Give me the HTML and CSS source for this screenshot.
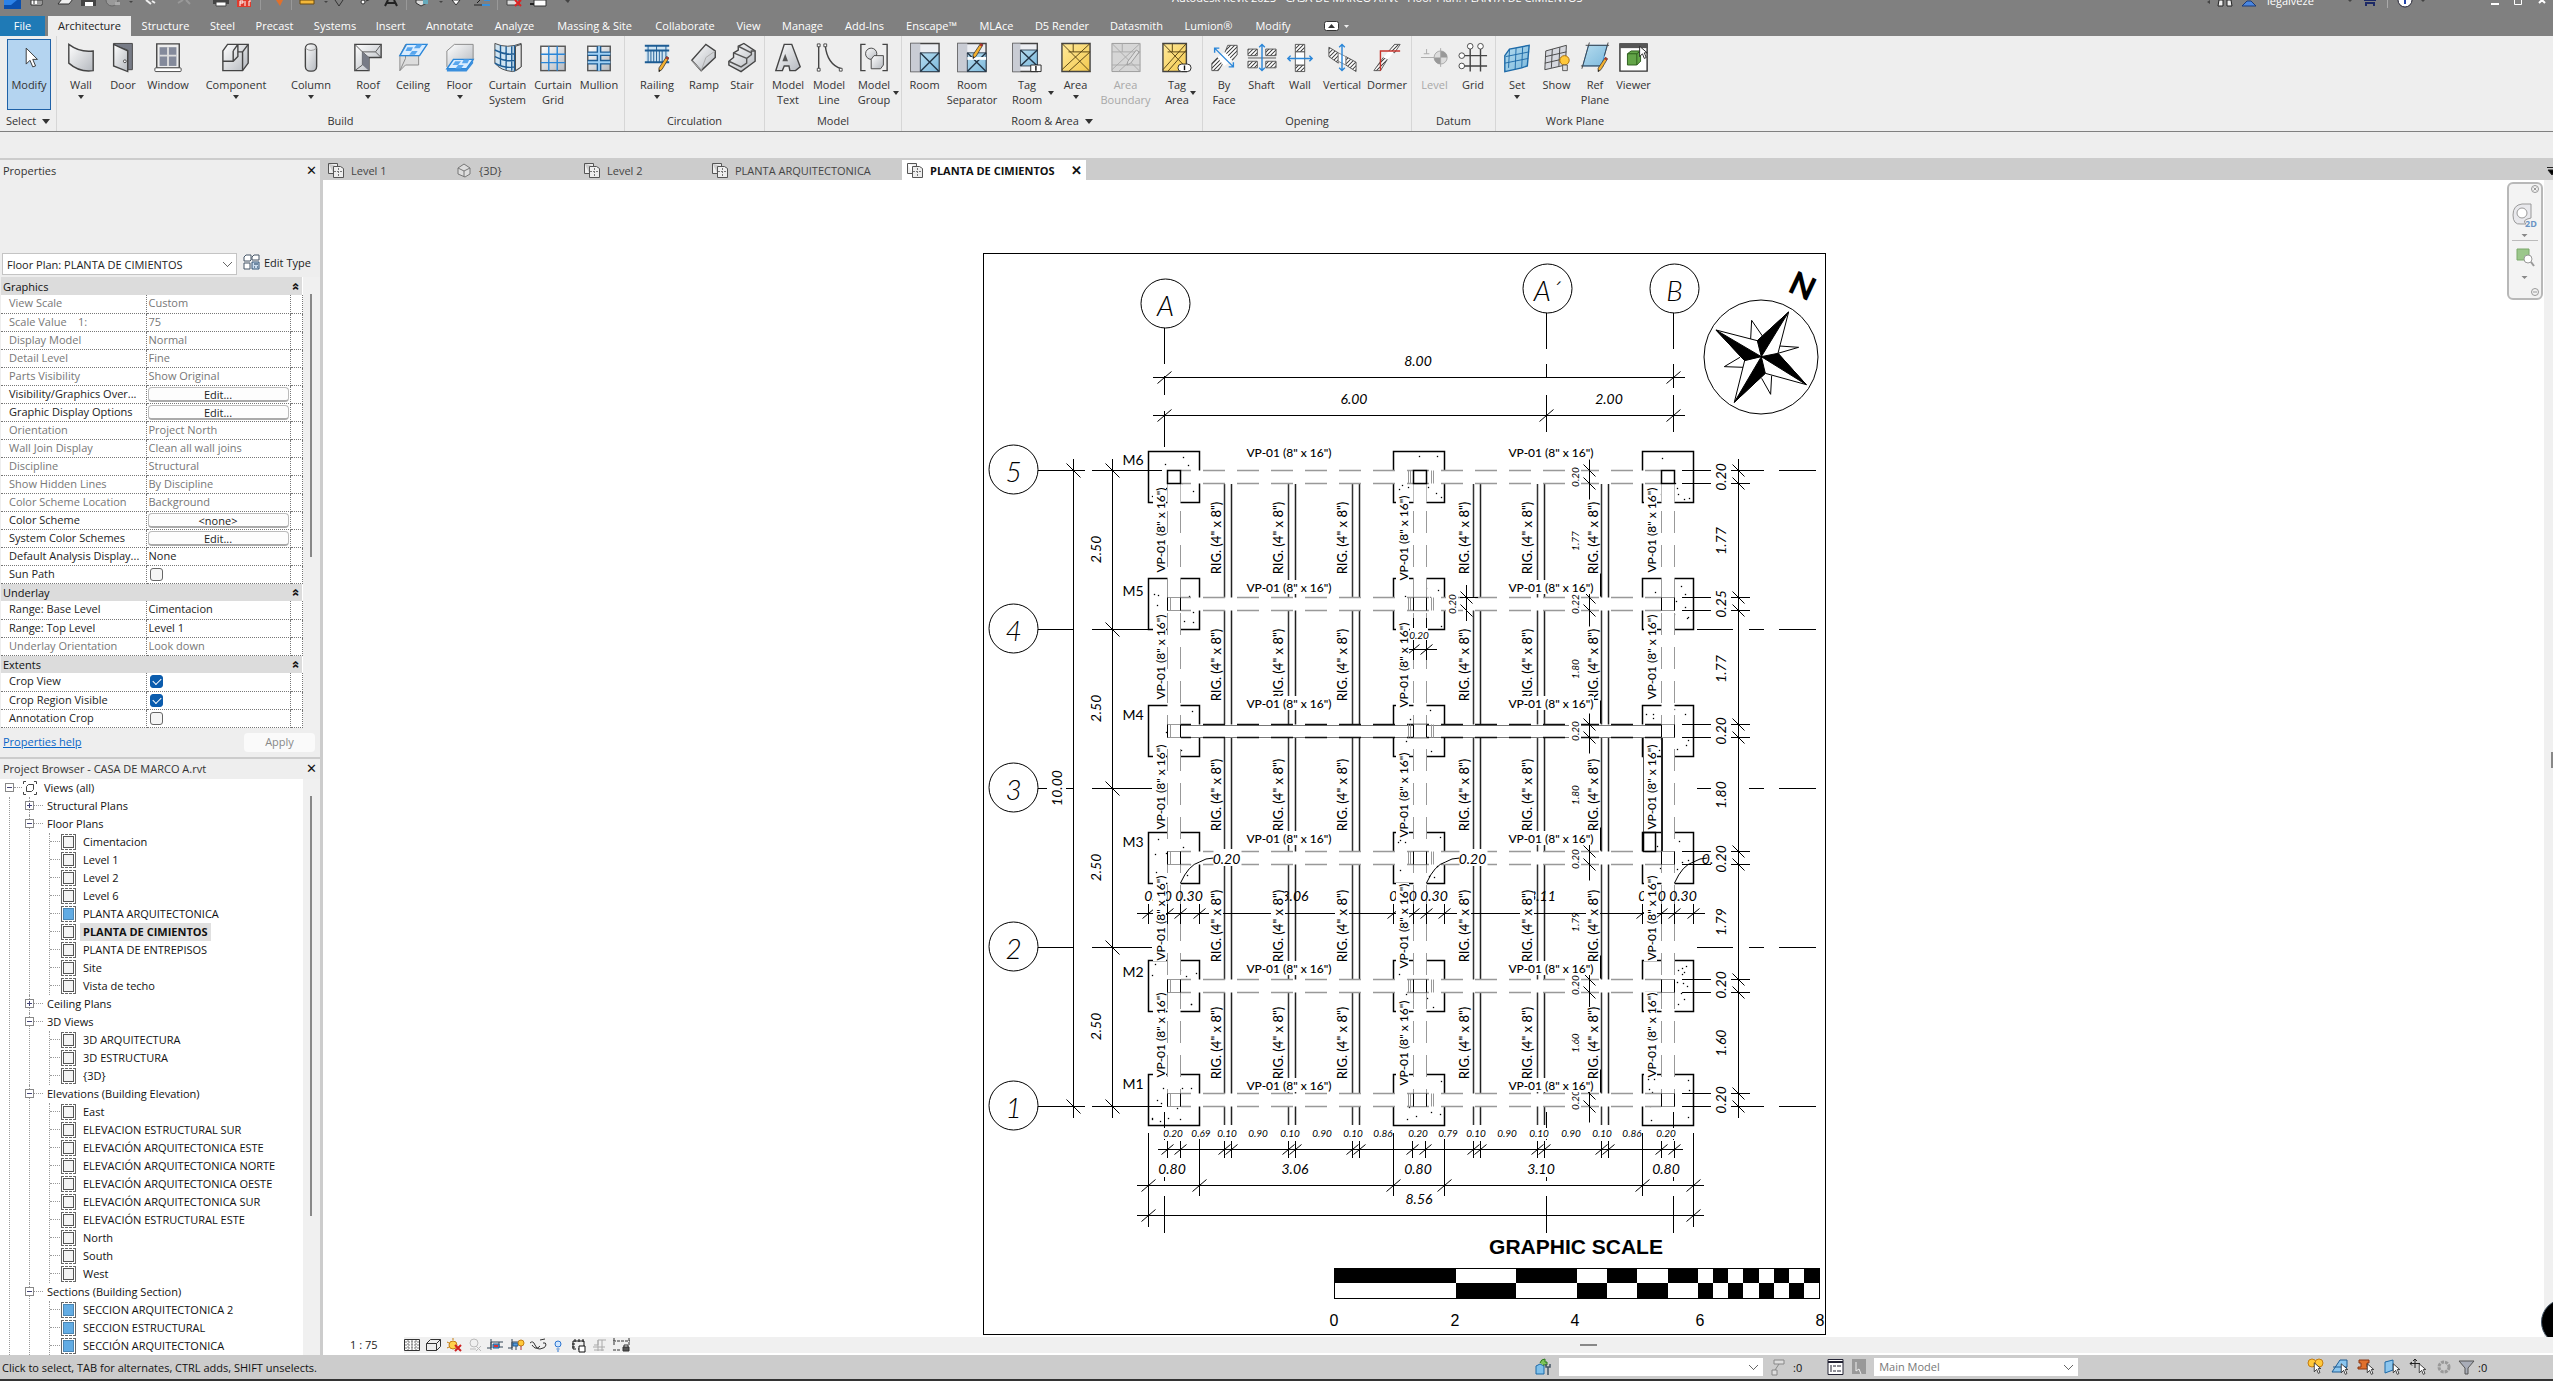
FILE: index.html
```
<!DOCTYPE html>
<html lang="en">
<head>
<meta charset="utf-8">
<title>Autodesk Revit 2023 - CASA DE MARCO A.rvt</title>
<link rel="stylesheet" href="styles.css">
</head>
<body>
<svg class="defs" aria-hidden="true">
  <defs>
    <linearGradient id="steel" x1="0" y1="0" x2="1" y2="1"><stop offset="0" stop-color="#fff"/><stop offset="1" stop-color="#b4b8be"/></linearGradient>
    <linearGradient id="sky" x1="0" y1="0" x2="1" y2="1"><stop offset="0" stop-color="#b5dcef"/><stop offset="1" stop-color="#7db9dc"/></linearGradient>
    <linearGradient id="gold" x1="0" y1="0" x2="1" y2="1"><stop offset="0" stop-color="#ffe99a"/><stop offset="1" stop-color="#f3c94e"/></linearGradient>
    <pattern id="hatch" width="3" height="3" patternUnits="userSpaceOnUse" patternTransform="rotate(45)"><rect width="3" height="3" fill="#fff"/><rect width="1" height="3" fill="#444"/></pattern>
    <symbol id="pencil" viewBox="0 0 14 22"><path d="M11 1l3 2L5 18l-4 3 0-5z" fill="#f4b02e" stroke="#333" stroke-width="1"/><path d="M11 1l3 2-1.500 2.500-3-2z" fill="#a33"/><path d="M1 21l0-3 2 1z" fill="#222"/></symbol>
    <symbol id="sheet" viewBox="0 0 16 16"><path d="M.5 1.500h9v3M.5 1.500v10h5M5.500 4.500h7l3 2v9h-10z" fill="#eee" stroke="#555"/><path d="M10.500 6v8M6 9.500h9" stroke="#777" stroke-dasharray="2 1"/></symbol>
    <symbol id="cursor" viewBox="0 0 10 16"><path d="M1 1v11l3-3 2 5 2-1-2-5h3z" fill="#fff" stroke="#222"/></symbol>
  </defs>
</svg>

<header>
  <div class="titlebar">
    <svg class="quick" height="16" fill="none">
      <path d="M4 0h17v9H4z" fill="#0a4fae"/><path d="M4 0h13l-6 5H4z" fill="#2c82e8"/>
      <path d="M31 0h11v5H31z" fill="#fff" stroke="#333"/><path d="M33 1h2M37 1h4M33 3h2M37 3h4" stroke="#333"/>
      <path d="M58 4l4-5h11l-4 5z" fill="#eee" stroke="#333"/>
      <path d="M81 0h15v6H81z" fill="#444"/><path d="M85 2h8v4h-8z" fill="#fff"/>
      <circle cx="112" cy="0" r="6" fill="#999" stroke="#666"/><path d="M115 2h5v3h-5z" fill="#aaa"/>
      <path d="M129 1h4l-2 2zM439 1h4l-2 2zM324 1h4l-2 2zM565 0h5l-2 3z" fill="#444"/>
      <path d="M146 0l5 4M152 1l3 2" stroke="#eee" stroke-width="2"/><path d="M178 3l5-3M186 0l4 4" stroke="#999" stroke-width="2"/>
      <path d="M213 0h16v4h-16z" fill="#444"/><path d="M216 2h10v4h-10z" fill="#fff" stroke="#444"/>
      <path d="M237 0h14v7h-14z" fill="#e03a2c"/><path d="M240 6V1h3v2h-3M245 1v5M249 6V1h2" stroke="#fff"/>
      <path d="M260.500 0v10M406.500 0v10M497.500 0v10M291.500 0v10" stroke="#999"/>
      <path d="M276 0h7l-3 6z" fill="#e0702c"/><path d="M300 0h14v4h-14z" fill="#f4b83a" stroke="#6b4b10"/>
      <path d="M335 0l4 6M343 0l-4 6" stroke="#333"/><circle cx="363" cy="2" r="2" fill="#fff" stroke="#333"/><path d="M366 1l5-2" stroke="#333"/>
      <path d="M385 6l3-6M397 6l-3-6M387 3h8" stroke="#222" stroke-width="2"/>
      <path d="M416 0h11v3l-6 3-5-3z" fill="#ddd" stroke="#333"/><path d="M423 0h5v4h-5z" fill="#6ab"/>
      <path d="M452 0h8l-4 5z" fill="#fff" stroke="#333"/><path d="M474 5h8M480 0l-3 3" stroke="#222"/><path d="M484 0h6M482 5h8" stroke="#3a8fd8" stroke-width="2"/>
      <path d="M507 0h12v5h-12z" fill="#ddd" stroke="#444"/><path d="M515 0l6 6M521 0l-6 6" stroke="#d22" stroke-width="2"/>
      <path d="M534 0h12v6h-12z" fill="#fff" stroke="#333"/><path d="M530 4h4" stroke="#222" stroke-width="2"/>
    </svg>
    <span class="app-title">Autodesk Revit 2023 - CASA DE MARCO A.rvt - Floor Plan: PLANTA DE CIMIENTOS</span>
    <svg class="info" width="60" height="10" viewBox="0 0 60 10"><path d="M0 2l3-2v4z" fill="#444"/><path d="M12 0h4v6h-5zM20 0h4l1 6h-5z" fill="#eee" stroke="#222"/><path d="M35 6l5-5h4l5 5z" fill="#4a86e0" stroke="#1b3a78"/></svg>
    <span class="user">legalveze</span>
    <svg class="win" width="205" height="16" viewBox="0 0 205 16"><path d="M0 0h4l-2 2z" fill="#444"/><path d="M16 0h12M17 3h10M18 6v-3M26 6v-3" stroke="#1d2a66" stroke-width="2"/><path d="M39.500 0v8" stroke="#aaa"/><circle cx="57" cy="0" r="7" fill="#fff" stroke="#223"/><path d="M57 0v4" stroke="#24a" stroke-width="2"/><path d="M73 0h4l-2 2z" fill="#444"/><path d="M143 4h8" stroke="#fff" stroke-width="2"/><path d="M166.500 0v4.500h7V0" fill="none" stroke="#fff"/><path d="M191 3l6-6M197 3l-4-4" stroke="#fff" stroke-width="2"/></svg>
  </div>
  <nav class="tabs">
    <button class="file">File</button><span></span><button class="on">Architecture</button><button>Structure</button><button>Steel</button><button>Precast</button><button>Systems</button><button>Insert</button><button>Annotate</button><button>Analyze</button><button>Massing &amp; Site</button><button>Collaborate</button><button>View</button><button>Manage</button><button>Add-Ins</button><button>Enscape™</button><button>MLAce</button><button>D5 Render</button><button>Datasmith</button><button>Lumion®</button><button>Modify</button>
    <button class="collapse" aria-label="Minimize ribbon"><svg width="26" height="12" viewBox="0 0 26 12"><rect x=".5" y="1.500" width="14" height="9" rx="2" fill="#fff" stroke="#333"/><path d="M4 8l3.500-4L11 8z" fill="#333"/><path d="M20 5h5l-2.500 3z" fill="#eee"/></svg></button>
  </nav>
  <div class="ribbon">
    <section class="panel p-select">
      <div class="tools"><button class="tool picked"><svg viewBox="0 0 32 32"><path d="M13 6v17l4-4 3 7 3-1-3-7h5z" fill="#fff" stroke="#333"/></svg>Modify</button></div>
      <h2>Select <i></i></h2>
    </section>
    <section class="panel p-build">
      <div class="tools">
        <button class="tool more"><svg viewBox="0 0 32 32"><path d="M3 2q12 9 26 7v21q-15 2-26-8z" fill="url(#steel)" stroke="#444" stroke-width="1.500"/></svg>Wall</button>
        <button class="tool"><svg viewBox="0 0 32 32"><path d="M6 1h20v28h-5V8L6 3z" fill="#777b86" stroke="#444"/><path d="M6 2l15 7v22L6 25z" fill="url(#steel)" stroke="#444" stroke-width="1.500"/><circle cx="18" cy="20" r="1.500" fill="#fff" stroke="#444"/></svg>Door</button>
        <button class="tool"><svg viewBox="0 0 32 32"><path d="M4 1.500h24v26H4z" fill="#eee" stroke="#444" stroke-width="1.500"/><path d="M7 5h18v20H7z" fill="#848a9b"/><path d="M16 5v20M7 14h18" stroke="#ddd" stroke-width="2"/><rect x="2" y="27" width="28" height="4" rx="1" fill="#fff" stroke="#444"/></svg>Window</button>
        <button class="tool more"><svg viewBox="0 0 32 32"><path d="M2 9l5-7h22v20l-6 8H2z" fill="url(#steel)" stroke="#444" stroke-width="1.500"/><path d="M13 9l5-7M2 20h11l5-5V2M13 20V9M18 10h5v20M23 10l6-8" fill="none" stroke="#444" stroke-width="1.500"/></svg>Component</button>
        <button class="tool more"><svg viewBox="0 0 32 32"><rect x="10" y="1.500" width="12" height="29" rx="5" fill="url(#steel)" stroke="#444" stroke-width="1.500"/><path d="M10 6q6 5 12 0" fill="none" stroke="#999"/></svg>Column</button>
        <button class="tool more"><svg viewBox="0 0 32 32"><path d="M2 2h28v14H17v14H2z" fill="url(#steel)" stroke="#444" stroke-width="1.500"/><path d="M2 2l8 8v14l-8 6M10 10h14l6 6M24 10l6-8M10 10l7 6" fill="none" stroke="#555"/><path d="M10 24l7 6V16l-7-6z" fill="#777b86"/></svg>Roof</button>
        <button class="tool"><svg viewBox="0 0 32 32"><path d="M2 14l6-12v15L2 30zM2 14h20v10H8L2 30" fill="#ddd" stroke="#888"/><path d="M9 2h22l-8 12H2z" fill="#d8ecff" stroke="#2a86d8" stroke-width="1.500"/><path d="M10 5h6l-2 4H8zM20 2h6l-3 4h-6zM15 9h6l-3 4h-6z" fill="#58a6ee"/></svg>Ceiling</button>
        <button class="tool more"><svg viewBox="0 0 32 32"><path d="M2 26V9l8-7h20v17" fill="url(#steel)" stroke="#888"/><path d="M9 18h21l-7 10H2z" fill="#d8ecff" stroke="#2a86d8" stroke-width="1.500"/><path d="M11 20h6l-3 4H8zM20 18h6l-2 4h-6zM14 24h6l-3 4h-6z" fill="#58a6ee"/><path d="M2 28h21v3H2zM23 28l7-9v3l-7 9z" fill="#3b8fdd"/></svg>Floor</button>
        <button class="tool"><svg viewBox="0 0 32 32"><path d="M2 1q13 6 28 0v25q-4 4-9 5Q8 30 2 22z" fill="#cfe4f2" stroke="#444"/><path d="M2 8q12 6 21 4M2 15q12 6 21 4M2 22q10 6 21 4M8 3v22M14 4v25M20 4v26M23 3v28" fill="none" stroke="#1d5c94" stroke-width="1.500"/><path d="M24 4l6-2v24l-6 4z" fill="#e8e8e8" stroke="#444"/></svg>Curtain<br>System</button>
        <button class="tool"><svg viewBox="0 0 32 32"><rect x="3" y="4" width="26" height="26" fill="url(#steel)" stroke="#555" stroke-width="1.500"/><path d="M11.500 4v26M20.500 4v26M3 12.500h26M3 21.500h26" stroke="#2a86d8" stroke-width="1.500"/></svg>Curtain<br>Grid</button>
        <button class="tool"><svg viewBox="0 0 32 32"><rect x="4" y="4" width="24" height="26" fill="url(#steel)" stroke="#555" stroke-width="1.500"/><path d="M16 4v26M4 12h24M4 21h24" stroke="#1d5c94" stroke-width="5"/><path d="M16 4v26M4 12h24M4 21h24" stroke="#9fd0f5" stroke-width="2"/></svg>Mullion</button>
      </div>
      <h2>Build</h2>
    </section>
    <section class="panel p-circulation">
      <div class="tools">
        <button class="tool more"><svg viewBox="0 0 32 32"><path d="M4 4h24v17H4z" fill="#cfe4f2"/><path d="M3 3.500h26M3 8.500h26M3 21h26" stroke="#1d5c94" stroke-width="2"/><path d="M6.500 3v18M9.500 9v12M12.500 9v12M15.500 3v18M18.500 9v12M21.500 9v12M25.500 3v18" stroke="#1d5c94"/><use href="#pencil" x="17" y="14" width="12" height="18"/></svg>Railing</button>
        <button class="tool"><svg viewBox="0 0 32 32"><path d="M3 19L18 2l10 7v7L13 30z" fill="url(#steel)" stroke="#444" stroke-width="1.500"/><path d="M3 19l10 11 5-14L28 9" fill="none" stroke="#aaa"/></svg>Ramp</button>
        <button class="tool"><svg viewBox="0 0 32 32"><path d="M2 20l5-4v-5l5-3V4l6-3 12 8v11L15 31 2 24z" fill="url(#steel)" stroke="#444" stroke-width="1.500"/><path d="M2 20l13 6 6-4v-5l5-4V9l4 0M7 11l14 6M12 4l14 7" fill="none" stroke="#555" stroke-width="1.500"/></svg>Stair</button>
      </div>
      <h2>Circulation</h2>
    </section>
    <section class="panel p-model">
      <div class="tools">
        <button class="tool"><svg viewBox="0 0 32 32"><path d="M12 2h8l9 24-5 4h-6l-1-5h-5l-2 5H3z" fill="url(#steel)" stroke="#444" stroke-width="1.500"/><path d="M13 12l-3 8h6z" fill="#555"/></svg>Model<br>Text</button>
        <button class="tool"><svg viewBox="0 0 32 32"><path d="M5 3v25M12 3q2 20 17 25" fill="none" stroke="#444" stroke-width="1.500"/><path d="M3.500 1.500h3v3h-3zM3.500 27.500h3v3h-3zM10.500 1.500h3v3h-3zM27 27.500h3v3h-3z" fill="#fff" stroke="#444"/></svg>Model<br>Line</button>
        <button class="tool side"><svg viewBox="0 0 32 32"><path d="M7 2H2v28h5M25 2h5v28h-5" fill="none" stroke="#444" stroke-width="1.500"/><circle cx="13" cy="12" r="6" fill="url(#steel)" stroke="#444"/><path d="M13 18l3-4h10v10l-3 4H13z" fill="url(#steel)" stroke="#444"/></svg>Model<br>Group</button>
      </div>
      <h2>Model</h2>
    </section>
    <section class="panel p-room">
      <div class="tools">
        <button class="tool"><svg viewBox="0 0 32 32"><path d="M1 1h30v30H1z" fill="#eceef2" stroke="#444" stroke-width="1.500"/><path d="M1 1h10v30H1z" fill="#c9ccd4"/><path d="M11 11h20v20H11z" fill="url(#sky)" stroke="#345"/><path d="M11 11l20 20M31 11L11 31" stroke="#234" stroke-width="1.500"/></svg>Room</button>
        <button class="tool"><svg viewBox="0 0 32 32"><path d="M1 1h30v30H1z" fill="#eceef2" stroke="#444" stroke-width="1.500"/><path d="M1 1h10v30H1z" fill="#c9ccd4"/><path d="M11 11h20v20H11z" fill="url(#sky)" stroke="#345"/><path d="M11 11l20 20M31 11L11 31" stroke="#234" stroke-width="1.500"/><path d="M11 17h20" stroke="#fff" stroke-width="3"/><use href="#pencil" x="15" y="0" width="14" height="18"/></svg>Room<br>Separator</button>
        <button class="tool side"><svg viewBox="0 0 32 32"><path d="M1 1h26v30H1z" fill="#eceef2" stroke="#444" stroke-width="1.500"/><path d="M1 1h8v30H1z" fill="#c9ccd4"/><path d="M9 8h18v17H9z" fill="url(#sky)" stroke="#345"/><path d="M9 8l18 17M27 8L9 25" stroke="#234" stroke-width="1.500"/><path d="M20 24h11v7H20z" fill="#fff" stroke="#222"/><path d="M25.500 25v5" stroke="#111" stroke-width="1.500"/></svg>Tag<br>Room</button>
        <button class="tool more"><svg viewBox="0 0 32 32"><path d="M1 1h30v30H1z" fill="url(#gold)" stroke="#444" stroke-width="1.500"/><path d="M1 1l30 30M31 10L8 31M31 1L1 29M8 10h23M13 1v9" stroke="#554213" fill="none"/></svg>Area</button>
        <button class="tool" disabled><svg viewBox="0 0 32 32"><path d="M1 1h30v30H1z" fill="#d6d6d6" stroke="#999"/><path d="M1 10h30M12 1v9M1 1l30 30M31 10L8 31M1 29L31 1M1 24h30" stroke="#aaa" fill="none"/><path d="M27 8l3 2-9 12-4 2 1-4z" fill="#ddd" stroke="#999"/></svg>Area<br>Boundary</button>
        <button class="tool side"><svg viewBox="0 0 32 32"><path d="M1 1h25v30H1z" fill="url(#gold)" stroke="#444" stroke-width="1.500"/><path d="M1 1l25 26M26 8L6 31M26 1L1 29M6 10h20M11 1v9" stroke="#554213" fill="none"/><rect x="17" y="23" width="14" height="8" rx="4" fill="#fff" stroke="#222"/><path d="M24 24.500v5" stroke="#111" stroke-width="1.500"/></svg>Tag<br>Area</button>
      </div>
      <h2>Room &amp; Area <i></i></h2>
    </section>
    <section class="panel p-opening">
      <div class="tools">
        <button class="tool"><svg viewBox="0 0 32 32"><path d="M20 3h10v10l-5 6-9-6zM3 30v-8l6-6 6 6-5 8z" fill="url(#hatch)" stroke="#555"/><path d="M9 16l8-6 8 9-9 6z" fill="#fff"/><path d="M6 6l20 20M6 11V6h5M26 21v5h-5" fill="none" stroke="#2a86d8" stroke-width="1.500"/></svg>By<br>Face</button>
        <button class="tool"><svg viewBox="0 0 32 32"><path d="M1 7h10v7H1zM20 7h11v7H20zM1 20h10v7H1zM20 20h11v7H20z" fill="url(#hatch)" stroke="#555"/><path d="M1 16.500h30" stroke="#555"/><path d="M16 2v28M13 5l3-3 3 3M13 27l3 3 3-3" fill="none" stroke="#2a86d8" stroke-width="1.500"/></svg>Shaft</button>
        <button class="tool"><svg viewBox="0 0 32 32"><path d="M11 2h10v8H11zM11 24h10v7H11z" fill="url(#hatch)" stroke="#555"/><path d="M11 10h10v14H11z" fill="#fff" stroke="#555"/><path d="M3 17h26M6 14l-3 3 3 3M26 14l3 3-3 3" fill="none" stroke="#2a86d8" stroke-width="1.500"/></svg>Wall</button>
        <button class="tool"><svg viewBox="0 0 32 32"><path d="M2 5l10 6v11L2 15zM20 15l11 6v10l-11-7z" fill="url(#hatch)" stroke="#555"/><path d="M12 11l8 4v9l-8-4z" fill="#fff" stroke="#888"/><path d="M16 2v28M13 5l3-3 3 3M13 27l3 3 3-3" fill="none" stroke="#2a86d8" stroke-width="1.500"/></svg>Vertical</button>
        <button class="tool"><svg viewBox="0 0 32 32"><path d="M2 30L12 16l5 1L9 30zM18 9l6-7h6l-6 9z" fill="url(#hatch)" stroke="#555"/><path d="M12 16l6-7h6l-7 9z" fill="#fff"/><path d="M9 30V9h21" fill="none" stroke="#c8352c" stroke-width="1.500"/></svg>Dormer</button>
      </div>
      <h2>Opening</h2>
    </section>
    <section class="panel p-datum">
      <div class="tools">
        <button class="tool" disabled><svg viewBox="0 0 32 32"><path d="M1 16h14M4 12h6M7 7v5" stroke="#aaa"/><circle cx="22" cy="16" r="7" fill="#ddd" stroke="#aaa"/><path d="M22 9v7h7a7 7 0 0 0-7-7M22 16v7a7 7 0 0 1-7-7z" fill="#999"/><path d="M22 6v20" stroke="#aaa"/></svg>Level</button>
        <button class="tool"><svg viewBox="0 0 32 32"><path d="M13 6v25M24 6v25M5 14h26M5 25h26" stroke="#444" stroke-width="1.500"/><circle cx="13" cy="4" r="3" fill="#fff" stroke="#444"/><circle cx="24" cy="4" r="3" fill="#fff" stroke="#444"/><circle cx="4" cy="14" r="3" fill="#fff" stroke="#444"/><circle cx="4" cy="25" r="3" fill="#fff" stroke="#444"/></svg>Grid</button>
      </div>
      <h2>Datum</h2>
    </section>
    <section class="panel p-workplane">
      <div class="tools">
        <button class="tool more"><svg viewBox="0 0 32 32"><path d="M3 14l5-7 21-4-2 22-6 2-18 4z" fill="url(#sky)" stroke="#1d6aa8" stroke-width="1.500"/><path d="M8 7l-1 20M15 6l-1 23M22 5l-1 22M4 15l25-5M3 22l25-5" stroke="#1d6aa8" fill="none"/></svg>Set</button>
        <button class="tool"><svg viewBox="0 0 32 32"><path d="M4 9l22-6-1 21L3 29z" fill="#d6d8de" stroke="#444"/><path d="M11 7l-1 20M19 5l-1 20M4 15l22-5M3 22l22-5" stroke="#444" fill="none"/><circle cx="24" cy="19" r="5" fill="#ffc83a" stroke="#a56a08"/><path d="M22 24h5v6h-5z" fill="#ddd" stroke="#555"/></svg>Show</button>
        <button class="tool"><svg viewBox="0 0 32 32"><path d="M9 3h20l-6 22H3z" fill="url(#sky)" stroke="#2a86d8"/><path d="M10 0L2 28M1 25h24M30 0l-4 14M6 3h25" stroke="#444" fill="none"/><use href="#pencil" x="18" y="15" width="12" height="17"/></svg>Ref<br>Plane</button>
        <button class="tool"><svg viewBox="0 0 32 32"><path d="M1 1.500h29v29H1z" fill="#fff" stroke="#333" stroke-width="1.500"/><path d="M1 1h29v5H1z" fill="#555"/><path d="M9 12l4-3h10v11l-4 4H9z" fill="#63a548" stroke="#2c5c1c"/><path d="M9 12h10v12M19 12l4-3" fill="none" stroke="#2c5c1c"/><use href="#cursor" x="21" y="3" width="10" height="16"/></svg>Viewer</button>
      </div>
      <h2>Work Plane</h2>
    </section>
  </div>
  <div class="options"></div>
</header>

<main>
  <aside>
    <section class="props">
      <div class="panel-title"><h2>Properties</h2><button class="close" aria-label="Close Properties">✕</button></div>
      <div class="type-row">
        <select aria-label="Element type"><option>Floor Plan: PLANTA DE CIMIENTOS</option></select>
        <button class="edit-type"><svg width="17" height="16" viewBox="0 0 17 16"><path d="M1 3l2-2h5v5l-1 1H1zM9 3l2-2h5v5H9zM1 9h6v6H1z" fill="#fff" stroke="#456"/><path d="M9 8h7v7H9z" fill="#cde" stroke="#357"/><path d="M11 10h4M11 13h1M14 13h1" stroke="#135"/></svg>Edit Type</button>
      </div>
      <div class="prop-area">
        <table>
          <colgroup><col class="c-name"><col class="c-value"><col class="c-assoc"></colgroup>
          <tr class="sec"><th colspan="3">Graphics<span>»</span></th></tr>
          <tr class="dim"><td>View Scale</td><td>Custom</td><td></td></tr>
          <tr class="dim"><td>Scale Value &nbsp;&nbsp; 1:</td><td>75</td><td></td></tr>
          <tr class="dim"><td>Display Model</td><td>Normal</td><td></td></tr>
          <tr class="dim"><td>Detail Level</td><td>Fine</td><td></td></tr>
          <tr class="dim"><td>Parts Visibility</td><td>Show Original</td><td></td></tr>
          <tr><td>Visibility/Graphics Over...</td><td><button>Edit...</button></td><td></td></tr>
          <tr><td>Graphic Display Options</td><td><button>Edit...</button></td><td></td></tr>
          <tr class="dim"><td>Orientation</td><td>Project North</td><td></td></tr>
          <tr class="dim"><td>Wall Join Display</td><td>Clean all wall joins</td><td></td></tr>
          <tr class="dim"><td>Discipline</td><td>Structural</td><td></td></tr>
          <tr class="dim"><td>Show Hidden Lines</td><td>By Discipline</td><td></td></tr>
          <tr class="dim"><td>Color Scheme Location</td><td>Background</td><td></td></tr>
          <tr><td>Color Scheme</td><td><button>&lt;none&gt;</button></td><td></td></tr>
          <tr><td>System Color Schemes</td><td><button>Edit...</button></td><td></td></tr>
          <tr><td>Default Analysis Display...</td><td>None</td><td></td></tr>
          <tr><td><label for="sun">Sun Path</label></td><td><input type="checkbox" id="sun"></td><td></td></tr>
          <tr class="sec"><th colspan="3">Underlay<span>»</span></th></tr>
          <tr><td>Range: Base Level</td><td>Cimentacion</td><td></td></tr>
          <tr><td>Range: Top Level</td><td>Level 1</td><td></td></tr>
          <tr class="dim"><td>Underlay Orientation</td><td>Look down</td><td></td></tr>
          <tr class="sec"><th colspan="3">Extents<span>»</span></th></tr>
          <tr><td><label for="crop">Crop View</label></td><td><input type="checkbox" id="crop" checked></td><td></td></tr>
          <tr><td><label for="region">Crop Region Visible</label></td><td><input type="checkbox" id="region" checked></td><td></td></tr>
          <tr><td><label for="anno">Annotation Crop</label></td><td><input type="checkbox" id="anno"></td><td></td></tr>
        </table>
        <div class="track"><div class="thumb thumb-props"></div></div>
      </div>
      <div class="prop-foot"><a href="#help">Properties help</a><button disabled>Apply</button></div>
    </section>
    <section class="browser">
      <div class="panel-title"><h2>Project Browser - CASA DE MARCO A.rvt</h2><button class="close" aria-label="Close Project Browser">✕</button></div>
      <div class="tree-area">
        <div class="tree">
          <div class="row root"><b class="ex"></b><i class="dash"></i><svg width="16" height="16" viewBox="0 0 16 16" fill="none" stroke="#444"><path d="M4 1.500H1.500V4M12 1.500h2.500V4M4 14.500H1.500V12M12 14.500h2.500V12"/><path d="M4.500 6.500l2-2h5v5l-2 2h-5z"/></svg>Views (all)</div>
          <ul class="groups">
            <li><div class="row"><b class="ex plus"></b><i class="dash"></i>Structural Plans</div></li>
            <li><div class="row"><b class="ex"></b><i class="dash"></i>Floor Plans</div>
              <ul><li>Cimentacion</li><li>Level 1</li><li>Level 2</li><li>Level 6</li><li class="used">PLANTA ARQUITECTONICA</li><li class="current"><span>PLANTA DE CIMIENTOS</span></li><li>PLANTA DE ENTREPISOS</li><li>Site</li><li>Vista de techo</li></ul></li>
            <li><div class="row"><b class="ex plus"></b><i class="dash"></i>Ceiling Plans</div></li>
            <li><div class="row"><b class="ex"></b><i class="dash"></i>3D Views</div>
              <ul><li>3D ARQUITECTURA</li><li>3D ESTRUCTURA</li><li>{3D}</li></ul></li>
            <li><div class="row"><b class="ex"></b><i class="dash"></i>Elevations (Building Elevation)</div>
              <ul><li>East</li><li>ELEVACION ESTRUCTURAL SUR</li><li>ELEVACIÓN ARQUITECTONICA ESTE</li><li>ELEVACIÓN ARQUITECTONICA NORTE</li><li>ELEVACIÓN ARQUITECTONICA OESTE</li><li>ELEVACIÓN ARQUITECTONICA SUR</li><li>ELEVACIÓN ESTRUCTURAL ESTE</li><li>North</li><li>South</li><li>West</li></ul></li>
            <li><div class="row"><b class="ex"></b><i class="dash"></i>Sections (Building Section)</div>
              <ul><li class="used">SECCION ARQUITECTONICA 2</li><li class="used">SECCION ESTRUCTURAL</li><li class="used">SECCIÓN ARQUITECTONICA</li></ul></li>
          </ul>
        </div>
        <div class="track"><div class="thumb thumb-tree"></div></div>
      </div>
    </section>
  </aside>

  <section class="view">
    <nav class="doc-tabs">
      <button><svg width="16" height="16"><use href="#sheet"/></svg>Level 1</button>
      <button><svg width="16" height="16" viewBox="0 0 16 16"><path d="M2 6l6-4 6 4v6l-5 3-7-3z" fill="#ddd" stroke="#777"/><path d="M2 6l6 3 6-3M8 9v6" fill="none" stroke="#777"/></svg>{3D}</button>
      <button><svg width="16" height="16"><use href="#sheet"/></svg>Level 2</button>
      <button class="wide"><svg width="16" height="16"><use href="#sheet"/></svg>PLANTA ARQUITECTONICA</button>
      <button class="on"><svg width="16" height="16"><use href="#sheet"/></svg>PLANTA DE CIMIENTOS<span>✕</span></button>
      <svg class="list" width="6" height="10" viewBox="0 0 6 10"><path d="M0 1.500h10M1 4h8L5 9z" stroke="#222"/></svg>
    </nav>
    <div class="stage">
      <svg id="plan" viewBox="323 180 2221 1157" role="img" aria-label="Foundation plan"></svg>
      <div class="vscroll"></div>
      <div class="navbar">
        <svg width="36" height="118" viewBox="0 0 36 118" fill="none" stroke="#999">
          <rect x="1" y="1" width="34" height="116" rx="5" fill="#f3f3f3" stroke="#b8b8b8" stroke-width="2"/>
          <circle cx="28" cy="7" r="3.500"/><path d="M26.500 5.500l3 3M29.500 5.500l-3 3"/>
          <circle cx="28" cy="110" r="3.500"/><path d="M26 110h4"/>
          <path d="M24 22H15q-9 1-9 11t8 9h5q-5-4 5-6z" fill="#e8e8ec"/><circle cx="15" cy="31" r="5" fill="#fff"/>
          <path d="M14.500 52h6l-3 3zM14.500 94h6l-3 3z" fill="#888" stroke="none"/>
          <path d="M5 58.500h26" stroke="#bbb"/>
          <path d="M10 67h12v11H10z" fill="#9bc78b" stroke="#7aa86a"/><circle cx="21" cy="77" r="4" fill="#fff"/><path d="M24 80l3 4" stroke-width="2"/>
          <text x="18" y="45">2D</text>
        </svg>
      </div>
      <div class="orb"></div>
    </div>
    <div class="view-bar">
      <span class="scale">1 : 75</span>
      <svg width="230" height="16" viewBox="0 0 230 16" fill="none" stroke="#333">
        <path d="M.5 2.500h15v11H.5z" fill="#fff"/><path d="M1 5h15M1 8h15M1 11h15M4 3v10M8 3v10M12 3v10" stroke="#777" stroke-dasharray="2 1"/>
        <path d="M22.500 6.500l4-4h10v7l-4 4h-10zM22.500 6.500h10v7M32.500 6.500l4-4" fill="#eee"/>
        <circle cx="49" cy="8" r="4" fill="#ffd24a" stroke="#c47d12"/><path d="M49 1v2M43 5l2 1M43 11l2-1" stroke="#c47d12"/><path d="M51 8l6 6M57 8l-6 6" stroke="#d02020" stroke-width="2"/>
        <circle cx="70" cy="6" r="4" stroke="#bbb"/><path d="M66 12h6M72 9l5 5M77 9l-5 5" stroke="#bbb"/>
        <path d="M83 11h4V5h12M87 2v11M95 5v5h4" stroke="#345"/><path d="M89 7h6v4h-6z" fill="#5b9ad8" stroke="#1d5c94"/><path d="M90 9h4" stroke="#d33" stroke-width="2"/>
        <path d="M104 11h4V5h9M108 2v11M112 9v4" stroke="#345"/><path d="M109 6h5v3h-5z" fill="#5b9ad8" stroke="#1d5c94"/><circle cx="117" cy="6" r="3" fill="#ffc83a" stroke="#c47d12"/><path d="M117 9v4" stroke="#a33"/>
        <path d="M126 6q3-3 5 2t5 4q6-1 6-4t-3-2M128 8q4 6 8 1M136 3l5-1"/>
        <circle cx="154" cy="7" r="3" fill="#cfe6ff" stroke="#2a74d0"/><path d="M152.500 12h3M153 14h2" stroke="#2a74d0"/>
        <path d="M169 4h11v8h-6M169 4v8h3M171 2v3M175 2v3M179 2v3M168 7h3M168 10h3" stroke="#111"/><path d="M175 9h6v6h-6z" fill="#fff" stroke="#111"/>
        <path d="M190 8h4V3h8M194 3v11M198 3v11M189 10h12M190 13h10" stroke="#aaa"/>
        <path d="M209 4h17M210 1v7M225 1v7M209 13h8" stroke-dasharray="3 1"/><path d="M219 10h6v4h-6z" fill="#555"/><path d="M220 10V8h4v2"/>
      </svg>
      <i class="hthumb"></i>
    </div>
  </section>
</main>

<footer>
  <span class="hint">Click to select, TAB for alternates, CTRL adds, SHIFT unselects.</span>
  <div class="worksets">
    <svg width="17" height="18" viewBox="0 0 17 18"><path d="M1 8l4-2 4 2v8H1z" fill="#7fc0ea" stroke="#1d6aa8"/><path d="M5 5q1-4 5-4v3h2v3H8" fill="#7ec45a" stroke="#2c7a1c"/><path d="M13 17V9M11 6v3h4V6" stroke="#456" stroke-width="1.500" fill="none"/></svg>
    <select class="white" aria-label="Workset"><option> </option></select>
    <svg width="16" height="18" viewBox="0 0 16 18"><path d="M4 2h10v4H4zM9 6l-4 6M2 12h5v5H2z" fill="#ddd" stroke="#888" stroke-width="1"/></svg><span>:0</span>
    <svg class="gap" width="17" height="18" viewBox="0 0 17 18"><path d="M1 1.500h15v15H1z" fill="#fff" stroke="#223"/><path d="M1 4h15" stroke="#223" stroke-width="2"/><path d="M4 7v7M6 8h3M10 8h4M6 13h3M10 13h4" stroke="#223"/></svg>
    <svg width="16" height="18" viewBox="0 0 16 18"><path d="M1 1h14v15H1z" fill="#999"/><path d="M5 4v9l3-2 2 5" stroke="#eee" fill="none"/></svg>
    <select class="white" aria-label="Design option"><option>Main Model</option></select>
  </div>
  <div class="selectors">
    <svg width="170" height="18" viewBox="0 0 170 18">
      <circle cx="6" cy="5" r="4" fill="#ffc83a" stroke="#c47d12"/><circle cx="13" cy="5" r="4" fill="#ffc83a" stroke="#c47d12"/><use href="#cursor" x="7" y="4" width="9" height="13"/>
      <path d="M26 14l8-12h7v7l-5 5z" fill="#8cc6ee" stroke="#1d5c94"/><path d="M27 9h14" stroke="#1d5c94"/><use href="#cursor" x="34" y="5" width="9" height="13"/>
      <path d="M53 2h10v3h-2v4h3v2H52V9h3V5h-2z" fill="#e0702c" stroke="#8a3510"/><use href="#cursor" x="60" y="5" width="9" height="13"/>
      <path d="M79 4l8-2v10l-8 3z" fill="#8cc6ee" stroke="#1d6aa8"/><use href="#cursor" x="86" y="5" width="9" height="13"/>
      <path d="M109 1v9M104 5.500h10M107 3l2-2 2 2M106 4l-2 1.500 2 2" stroke="#222" fill="none"/><use href="#cursor" x="112" y="5" width="9" height="13"/>
      <circle cx="138" cy="9" r="5" fill="none" stroke="#999" stroke-width="3" stroke-dasharray="3 1"/>
      <path d="M153 3h15l-6 7v6h-3v-6z" fill="#a9adb8" stroke="#555"/>
    </svg><span>:0</span>
  </div>
</footer>
<script src="plan.js"></script>
</body>
</html>
```
FILE: styles.css
```
* { box-sizing: border-box; }
body { margin: 0; height: 100vh; display: flex; flex-direction: column; overflow: hidden; background: #eee; color: #222; font: 11px/15px "Open Sans", "Noto Sans", sans-serif; }
button, select, input { font: inherit; color: inherit; margin: 0; }
button { border: 0; background: none; padding: 0; white-space: nowrap; }
h2 { margin: 0; font: inherit; }
ul { list-style: none; margin: 0; padding: 0; }
.defs { position: absolute; width: 0; height: 0; }

.titlebar { height: 16px; background: #808080; color: #fff; display: flex; align-items: flex-start; overflow: hidden; }
.titlebar span { line-height: 15px; white-space: nowrap; }
.quick { flex: 0 0 1172px; }
.app-title { flex: 0 0 1035px; margin-top: -10px; }
.info { flex: none; }
.user { width: 84px; margin-top: -7px; }
.win { flex: none; }

.tabs { height: 20px; background: #808080; color: #fff; display: grid; grid-template-columns: 45px 3px 83px 69px 45px 59px 62px 49px 69px 61px 99px 82px 45px 63px 61px 73px 57px 74px 75px 69px 60px 60px; }
.tabs button { text-align: center; padding-bottom: 2px; }
.tabs .file { background: #1f7ab6; }
.tabs .on { background: #eee; color: #222; }
.tabs .collapse { display: flex; align-items: center; justify-content: center; padding-bottom: 0; padding-left: 8px; }

.ribbon { height: 96px; display: flex; border-bottom: 1px solid #808080; color: #333; }
.panel { border-right: 1px solid #d6d6d6; padding-top: 3px; display: flex; flex-direction: column; }
.panel h2 { height: 20px; line-height: 20px; text-align: center; }
.panel h2 i { display: inline-block; border: 4px solid transparent; border-top: 5px solid #333; border-bottom: 0; margin-left: 3px; vertical-align: 1px; }
.tools { flex: 1; display: grid; justify-content: start; align-items: start; }
.p-select { width: 57px; }
.p-select .tools { grid-template-columns: 44px; padding-left: 7px; }
.p-build { width: 568px; }
.p-build .tools { grid-template-columns: 48px 36px 54px 82px 68px 46px 44px 49px 47px 44px 48px; }
.p-circulation { width: 140px; }
.p-circulation .tools { grid-template-columns: 50px 44px 32px; padding-left: 7px; }
.p-model { width: 137px; }
.p-model .tools { grid-template-columns: 46px 36px 54px; }
.p-room { width: 301px; }
.p-room .tools { grid-template-columns: 43px 52px 58px 39px 61px 42px; padding-left: 1px; }
.p-opening { width: 209px; }
.p-opening .tools { grid-template-columns: 40px 35px 42px 42px 48px; padding-left: 1px; }
.p-datum { width: 84px; }
.p-datum .tools { grid-template-columns: 41px 36px; padding-left: 2px; }
.p-workplane { width: 158px; border-right: 0; }
.p-workplane .tools { grid-template-columns: 38px 41px 36px 41px; padding-left: 2px; }
.tool { display: block; text-align: center; position: relative; }
.tool svg { display: block; width: 30px; height: 31px; margin: 3px auto 4px; }
.tool:disabled { color: #a8a8a8; }
.picked { background: #b4d4f0; border: 1px solid #1f62a8; padding-bottom: 17px; }
.picked svg { margin-top: 2px; }
.more::after, .side::after { content: ""; position: absolute; border: 3px solid transparent; border-top: 4px solid #333; border-bottom: 0; }
.more::after { left: 50%; margin-left: -3px; top: 56px; }
.side::after { right: 2px; top: 52px; }
.options { height: 26px; }

main { flex: 1; min-height: 0; display: grid; grid-template-columns: 323px 1fr; }
aside { border-top: 2px solid #ccc; border-right: 3px solid #ccc; display: grid; grid-template-rows: 1fr 1fr; gap: 2px; background: #ccc; min-height: 0; }
aside > section { background: #eee; display: flex; flex-direction: column; min-height: 0; }
.panel-title { flex: none; height: 20px; display: flex; justify-content: space-between; align-items: center; padding: 0 3px; color: #333; }
.close { width: 12px; font-size: 13px; color: #111; }
.type-row { flex: none; margin-top: 73px; height: 24px; display: flex; align-items: flex-start; padding-left: 2px; gap: 6px; }
select { appearance: none; background: #fff; border: 1px solid #c4c4c4; border-radius: 0; padding: 0 4px; background-repeat: no-repeat; background-image: linear-gradient(45deg, transparent 44%, #666 44%, #666 56%, transparent 56%), linear-gradient(-45deg, transparent 44%, #666 44%, #666 56%, transparent 56%); background-size: 5px 5px; background-position: right 8px center, right 4px center; }
.type-row select { width: 235px; height: 22px; }
.edit-type { display: flex; align-items: center; gap: 4px; height: 18px; }
.prop-area, .tree-area { flex: 1; min-height: 0; overflow: hidden; display: flex; justify-content: space-between; align-items: flex-start; }
table { flex: none; width: 301px; border-collapse: collapse; table-layout: fixed; background: #fff; margin-left: 1px; }
.c-name { width: 145px; }
.c-value { width: 144px; }
.c-assoc { width: 12px; }
td, th { height: 18px; padding: 0; line-height: 15px; overflow: hidden; white-space: nowrap; }
td { border-bottom: 1px dotted #777; border-right: 1px dotted #777; vertical-align: top; }
td:nth-child(1) { padding-left: 8px; }
td:nth-child(2) { padding-left: 2px; }
.sec th { background: #dcdcdc; text-align: left; font-weight: 400; padding-left: 2px; color: #111; }
.sec span { float: right; width: 16px; text-align: center; font-weight: 700; font-size: 13px; transform: rotate(-90deg); }
.dim { color: #777; }
td button { display: block; width: 141px; height: 15px; line-height: 13px; text-align: center; border: 1px solid #bbb; border-bottom: 2px solid #aaa; border-radius: 4px; background: #fdfdfd; margin: 1px 0 0 -1px; }
td input { appearance: none; display: block; width: 13px; height: 13px; border: 1px solid #666; border-radius: 3px; background: #f5f5f5; margin: 2px 0 0 1px; }
td input:checked { background: #0b5cad; border-color: #0b5cad; }
td input:checked::after { content: ""; display: block; width: 7px; height: 4px; border-left: 1px solid #fff; border-bottom: 1px solid #fff; transform: rotate(-45deg); margin: 2px; }
.track { width: 17px; flex: none; align-self: stretch; background: #f0f0f0; padding: 17px 0 0 7px; }
.thumb { width: 2px; background: #888; }
.thumb-props { height: 263px; }
.thumb-tree { height: 420px; }
.prop-foot { flex: none; height: 27px; display: flex; justify-content: space-between; align-items: flex-start; padding: 3px 5px 0 3px; line-height: 18px; }
.prop-foot a { color: #0a66c8; }
.prop-foot button { width: 71px; height: 19px; background: #fafafa; border-radius: 4px; color: #888; }

.tree { flex: 1; background: #fff; height: 100%; color: #111; }
.row, .groups ul li { height: 18px; line-height: 18px; display: flex; align-items: center; white-space: nowrap; }
.root { padding-left: 5px; }
.root svg { margin-right: 6px; }
.ex { width: 9px; height: 9px; flex: none; border: 1px solid #888; background: linear-gradient(#447, #447) center / 5px 1px no-repeat #fff; }
.plus { background: linear-gradient(#447, #447) center / 5px 1px no-repeat, linear-gradient(#447, #447) center / 1px 5px no-repeat #fff; }
.dash { width: 9px; border-top: 1px dotted #999; margin-right: 4px; flex: none; }
.root .dash { margin-right: 0; width: 8px; }
.groups { margin-left: 9px; border-left: 1px dotted #999; padding-left: 19px; }
.groups > li { border-left: 1px dotted #999; }
.groups .row { margin-left: -5px; }
.groups ul { margin-left: 19px; border-left: 1px dotted #999; }
.groups ul li::before { content: ""; width: 10px; border-top: 1px dotted #999; }
.groups ul li { background: linear-gradient(#f4f4f4, #f4f4f4) 14px 4px / 9px 10px no-repeat, linear-gradient(#555, #555) 13px 3px / 11px 12px no-repeat, linear-gradient(#fff, #fff) 12px 2px / 13px 14px no-repeat, repeating-linear-gradient(90deg, #666 0 3px, #fff 3px 4px) 11px 1px / 15px 16px no-repeat; gap: 23px; }
.groups ul .used { background: linear-gradient(#62ace4, #62ace4) 14px 4px / 9px 10px no-repeat, linear-gradient(#4a86b4, #4a86b4) 13px 3px / 11px 12px no-repeat, linear-gradient(#fff, #fff) 12px 2px / 13px 14px no-repeat, repeating-linear-gradient(90deg, #666 0 3px, #fff 3px 4px) 11px 1px / 15px 16px no-repeat; }
.current { font-weight: 700; }
.current span { background: #e0e0e0; padding: 0 3px; margin-left: -3px; }

.view { min-width: 0; display: flex; flex-direction: column; }
.doc-tabs { flex: none; height: 22px; padding-top: 2px; background: #ccc; display: flex; color: #444; }
.doc-tabs button { width: 128px; display: flex; align-items: center; gap: 7px; padding-left: 5px; }
.doc-tabs .wide { width: 195px; }
.doc-tabs .on { width: 184px; background: #fff; color: #111; font-weight: 700; }
.doc-tabs .on span { font-size: 13px; margin-left: auto; padding-right: 4px; }
.list { margin: 6px 0 0 auto; }
.stage { flex: 1; min-height: 0; background: #fff; display: flex; position: relative; overflow: hidden; }
#plan { flex: 1; min-width: 0; height: 100%; display: block; }
.vscroll { width: 9px; background: linear-gradient(#888, #888) right 572px / 2px 16px no-repeat #f0f0f0; }
.navbar { position: absolute; right: 10px; top: 2px; }
.navbar svg { display: block; }
.navbar text { font: 700 9px "Open Sans", sans-serif; fill: #6a94c4; stroke: none; }
.orb { position: absolute; right: -34px; bottom: -8px; width: 46px; height: 46px; border-radius: 50%; background: #000; border: 1px solid #456; }
.view-bar { flex: none; height: 18px; background: #f0f0f0; border-bottom: 2px solid #fff; display: flex; align-items: center; }
.scale { width: 81px; padding-left: 27px; align-self: stretch; background: #fff; }
.hthumb { width: 17px; height: 2px; background: #888; margin-left: 946px; }

#plan text { text-anchor: middle; dominant-baseline: central; fill: #000; font-family: Lato, sans-serif; }
#plan .tag { font-size: 12px; font-weight: 500; }
#plan .joist { font-size: 13px; }
#plan .dim-s { font-size: 10px; font-style: italic; }
#plan .dim-m { font-size: 14px; font-style: italic; }
#plan .frame-tag { font-size: 14px; }
#plan .bubble { font-size: 28px; font-style: italic; font-weight: 300; }
#plan .north { font-size: 32px; font-weight: 900; }
#plan .heading { font: 700 21px "Liberation Sans", Arial, sans-serif; }
#plan .units { font: 16px "Liberation Sans", Arial, sans-serif; }

footer { flex: none; height: 26px; background: #ccc; border-bottom: 2px solid #333; display: flex; align-items: center; padding-left: 2px; color: #111; }
.hint { width: 1533px; white-space: nowrap; }
.worksets { display: flex; align-items: center; gap: 7px; }
.white { width: 204px; height: 18px; border-color: #fff; color: #777; line-height: 14px; }
.gap { margin-left: 18px; }
.selectors { margin-left: auto; width: 247px; display: flex; align-items: center; gap: 2px; }
```
FILE: plan.js
```
// Draws the foundation plan: grid axes, footings, beams, joists and dimensions.
const parts = [];
const line = (x1, y1, x2, y2, color = '#000', extra = '') =>
  parts.push(`<line x1="${x1}" y1="${y1}" x2="${x2}" y2="${y2}" stroke="${color}" ${extra}/>`);
const box = (x, y, w, h, fill = 'none', stroke = 'none', extra = '') =>
  parts.push(`<rect x="${x}" y="${y}" width="${w}" height="${h}" fill="${fill}" stroke="${stroke}" ${extra}/>`);
const label = (x, y, cls, str, up) =>
  parts.push(`<text class="${cls}" x="${x}" y="${y}"${up ? ` transform="rotate(-90 ${x} ${y})"` : ''}>${str}</text>`);
const slash = (x, y, s = 7) => line(x - s, y + s - 1, x + s, y - s + 1);
const backslash = (x, y, s = 7) => line(x - s, y - s, x + s, y + s);

const rows = [470.5, 597.5, 724.5, 851.5, 979.5, 1093.5];
const padTops = [451.5, 578.5, 705.5, 832.5, 960.5, 1074.5];
const cols = [{ pad: 1148.5, x: 1167.5 }, { pad: 1393.5, x: 1413.5 }, { pad: 1642.5, x: 1661.5 }];
const joists = [1224.5, 1288.5, 1352.5, 1473.5, 1537.5, 1601.5];

box(983.5, 253.5, 842, 1081, '#fff', '#000');

// footings with concrete stipple
let seed = 7;
const rnd = () => (seed = (seed * 16807) % 2147483647) / 2147483647;
for (const c of cols) for (const y of padTops) {
  box(c.pad, y, 51, 51, '#fff', '#000', 'stroke-width="1.500"');
  for (let i = 0; i < 11; i++) box(Math.round(c.pad + 3 + rnd() * 45), Math.round(y + 3 + rnd() * 45), 1, 1, '#000', '#000', 'stroke-width=".3"');
}

// joists
for (const x of joists) {
  line(x, 484, x, 1125, '#333', 'stroke-width="1.500"');
  line(x + 7, 484, x + 7, 1125, '#222', 'stroke-width="1.500"');
}

// beams
for (const c of cols) {
  box(c.x, 471, 13, 636, '#fff');
  line(c.x, 511, c.x, 1106, '#999', 'stroke-dasharray="22 12"');
  line(c.x + 13, 511, c.x + 13, 1106, '#999', 'stroke-dasharray="22 12"');
  line(c.x, 484, c.x, 502, '#bbb');
  line(c.x + 13, 484, c.x + 13, 502, '#bbb');
}
rows.forEach((y, i) => {
  const color = i === 2 ? '#111' : '#999';
  box(1181, y, 481, 13, '#fff');
  if (i === 2) { line(1181, y + 1, 1661, y + 1, '#777'); line(1181, y + 13, 1661, y + 13, '#777'); }
  line(1181, y, 1661, y, color, 'stroke-dasharray="22 12" stroke-dashoffset="12" stroke-width="1.500"');
  line(1181, y + 13, 1661, y + 13, color, 'stroke-dasharray="22 12" stroke-dashoffset="12" stroke-width="1.500"');
  cols.forEach((c, k) => {
    box(c.x, y, 13, 13, '#fff', i === 0 ? '#000' : '#999', i === 0 ? 'stroke-width="1.500"' : '');
    if (i) { line(c.x, y, c.x, y + 13); line(c.x + 13, y, c.x + 13, y + 13); }
    if (k === 1) [-5, -3, 18, 20].forEach(d => line(c.x + d, y, c.x + d, y + 13, '#999'));
    else if (i && !k) line(c.x + 3, y, c.x + 3, y + 13, '#999');
  });
});
line(1643.5, 738, 1643.5, 851, '#555');
line(1662, 738, 1662, 851, '#222', 'stroke-width="2"');
box(1643.5, 832.5, 12, 19, 'none', '#000', 'stroke-width="1.500"');

// lettered axes
[['A', 1165.5, 303.5, [[328, 364], [376, 395], [411, 447]]],
 ['A´', 1547.5, 288.5, [[313, 349], [364, 378], [395, 432]]],
 ['B', 1674.5, 288.5, [[313, 349], [364, 388], [395, 432]]]].forEach(([name, x, y, segs]) => {
  parts.push(`<circle cx="${x}" cy="${y}" r="24.500" fill="#fff" stroke="#000"/>`);
  label(x, y + 1, 'bubble', name);
  segs.forEach(([a, b]) => line(x - 1, a, x - 1, b));
  [[1112, 1140], [1177, 1181], [1196, 1233]].forEach(([a, b]) => line(x - 1, a, x - 1, b));
});

// numbered axes
['5', '4', '3', '2', '1'].forEach((n, i) => {
  const y = 470.5 + 159 * i;
  parts.push(`<circle cx="1013.5" cy="${y - 1}" r="24.500" fill="#fff" stroke="#000"/>`);
  label(1013.5, y, 'bubble', n);
  const end = i === 0 || i === 4;
  if (i === 2) { line(1038, y, 1047, y); line(1066, y, 1073, y); } else line(1038, y, end ? 1085 : 1073, y);
  line(1092, y, 1106, y);
  line(1106, y, end ? 1162 : 1152, y);
  if (end || i === 2) line(1697, y, 1711, y); else line(1697, y, 1733, y);
  line(1749, y, 1764, y);
  line(1779, y, 1816, y);
  backslash(1112.5, y);
  if (end) backslash(1073.5, y);
  if (i < 4) label(1095, y + 79, 'dim-m', '2.50', true);
});
line(1073.5, 459, 1073.5, 1118);
line(1112.5, 459, 1112.5, 1118);
label(1056, 788, 'dim-m', '10.00', true);

// overall dimensions at the top
line(1153, 377.5, 1685, 377.5);
[1164.5, 1673.5].forEach(x => slash(x, 377.5));
label(1418, 360, 'dim-m', '8.00');
line(1153, 415.5, 1685, 415.5);
[1164.5, 1546.5, 1673.5].forEach(x => slash(x, 415.5));
label(1354, 398, 'dim-m', '6.00');
label(1609, 398, 'dim-m', '2.00');

// bay dimensions on the right, and their small repeat inside the plan
const outer = ['0.20', '1.77', '0.25', '1.77', '0.20', '1.80', '0.20', '1.79', '0.20', '1.60', '0.20'];
const inner = ['0.20', '1.77', '0.22', '1.80', '0.20', '1.80', '0.20', '1.79', '0.20', '1.60', '0.20'];
const mids = [477, 541, 604, 669, 731, 795, 859, 922, 985, 1043, 1100];
line(1738.5, 459, 1738.5, 1118);
rows.forEach((y, i) => {
  [y, y + 13].forEach(t => {
    line(1682, t, 1711, t); line(1731, t, 1750, t);
    backslash(1738.5, t, 6); backslash(1589.5, t, 6);
  });
  line(1589.5, y - 11, 1589.5, y + 29);
  if (i) line(1600.5, y - 24, 1600.5, y - 1);
});
outer.forEach((v, i) => label(1720, mids[i], 'dim-m', v, true));
inner.forEach((v, i) => { if (i % 2 === 0) box(1569, mids[i] - 11, 12, 22, '#fff'); label(1575, mids[i], 'dim-s', v, true); });

// local column dimensions
line(1466.5, 585, 1466.5, 621);
backslash(1466.5, 597.5, 6); backslash(1466.5, 610.5, 6);
line(1460, 597.5, 1478, 597.5);
box(1446, 592, 12, 24, '#fff');
label(1452, 604, 'dim-s', '0.20', true);
line(1405, 649.5, 1437, 649.5);
slash(1413.5, 649.5, 6); slash(1426.5, 649.5, 6);
line(1413.5, 618, 1413.5, 660); line(1426.5, 618, 1426.5, 660);

// dimension string across the lower bay
line(1137, 913.5, 1705, 913.5);
[1148.5, 1167.5, 1180.5, 1199.5, 1393.5, 1413.5, 1426.5, 1444.5, 1642.5, 1661.5, 1674.5, 1693.5].forEach(x => {
  slash(x, 913.5, 6); line(x, 904, x, 924);
});
[[1158, '0.30'], [1189, '0.30'], [1295, '3.06'], [1403, '0.30'], [1434, '0.30'], [1542, '3.11'], [1652, '0.30'], [1683, '0.30']]
  .forEach(([x, v]) => label(x, 895, 'dim-m', v));
[1180.5, 1426.5, 1674.5].forEach((x, i) => {
  parts.push(`<path d="M${x} 883q8-18 19-21q6-4 14-4" fill="none" stroke="#000"/>`);
  if (i < 2) { box(x + 33, 849, 28, 17, '#fff'); label(x + 46, 858, 'dim-m', '0.20'); }
  else label(x + 33, 858, 'dim-m', '0.');
});

// beam and joist tags mask the linework behind them
const VP = 'VP-01 (8" x 16")', RIG = 'RIG. (4" x 8")';
const vpSide = [530, 657, 787, 918, 1035], vpMid = [538, 665, 795, 926, 1043];
[1216, 1278, 1342, 1464, 1527, 1593].forEach(x => vpMid.forEach(y => {
  box(x - 7, y - 36, 14, 72, '#fff');
  label(x, y, 'tag joist', RIG, true);
}));
[452, 587, 703, 838, 968, 1085].forEach((y, i) => [1289, 1551].forEach(x => {
  if (i) box(x - 43, y - 7, 86, 14, '#fff');
  label(x, y, 'tag', VP);
}));
[[1160, vpSide], [1403, vpMid], [1651, vpSide]].forEach(([x, ys]) => ys.forEach(y => {
  box(x - 7, y - 43, 13, 86, '#fff');
  label(x, y, 'tag', VP, true);
}));
box(1410, 628, 18, 12, '#fff');
label(1419, 635, 'dim-s', '0.20');

['M6', 'M5', 'M4', 'M3', 'M2', 'M1'].forEach((m, i) => label(1133, [459, 590, 714, 841, 971, 1083][i], 'frame-tag', m));

// dimension strings below the plan
line(1158, 1149.5, 1683, 1149.5);
[1167.5, 1180.5, 1224.5, 1231.5, 1288.5, 1295.5, 1352.5, 1359.5, 1412.5, 1425.5, 1473.5, 1480.5, 1537.5, 1544.5, 1601.5, 1608.5, 1661.5, 1674.5]
  .forEach(x => { slash(x, 1149.5, 6); line(x, 1141, x, 1158); });
line(1137, 1185.5, 1704, 1185.5);
[1148.5, 1199.5, 1393.5, 1444.5, 1642.5, 1693.5].forEach((x, i) => {
  slash(x, 1185.5); line(x, 1133, x, i === 0 || i === 5 ? 1227 : 1196);
});
[[1173, '0.20'], [1201, '0.69'], [1227, '0.10'], [1258, '0.90'], [1290, '0.10'], [1322, '0.90'], [1353, '0.10'], [1383, '0.86'], [1418, '0.20'],
 [1448, '0.79'], [1476, '0.10'], [1507, '0.90'], [1539, '0.10'], [1571, '0.90'], [1602, '0.10'], [1632, '0.86'], [1666, '0.20']]
  .forEach(([x, v]) => { box(x - 9, 1128, 19, 11, '#fff'); label(x, 1133, 'dim-s', v); });
[[1172, '0.80'], [1295, '3.06'], [1418, '0.80'], [1541, '3.10'], [1666, '0.80']].forEach(([x, v]) => label(x, 1168, 'dim-m', v));
line(1137, 1215.5, 1704, 1215.5);
slash(1148.5, 1215.5); slash(1693.5, 1215.5);
label(1419, 1198, 'dim-m', '8.56');

// graphic scale
label(1576, 1246, 'heading', 'GRAPHIC SCALE');
const stops = [1334, 1456, 1516, 1577, 1607, 1637, 1668, 1698, 1713, 1728, 1743, 1759, 1774, 1789, 1804, 1820];
for (let i = 0; i < 15; i++) box(stops[i], i % 2 ? 1283 : 1268, stops[i + 1] - stops[i], 15, '#000');
box(1334.5, 1268.5, 485, 30, 'none', '#000');
[[1334, '0'], [1455, '2'], [1575, '4'], [1700, '6'], [1820, '8']].forEach(([x, v]) => label(x, 1320, 'units', v));

// compass rose
parts.push(`<circle cx="1761" cy="357" r="57" fill="none" stroke="#000"/>
<g transform="translate(1400 250) scale(.3333)" stroke="#000" stroke-width="3" stroke-linejoin="round" fill="#fff">
<path d="M1052 268L1055 211 1090 262M1138 288L1196 292 1134 310M1115 377L1112 433 1085 385M1030 352L973 350 1020 322"/>
<path d="M1166 186L1134 310 1219 404 1096 370 1003 457 1034 332 948 240 1072 272z"/>
<path fill="#000" d="M1166 186L1072 272 1084 320zM948 240L1034 332 1084 320zM1003 457L1096 370 1084 320zM1219 404L1134 310 1084 320z"/></g>
<text class="north" x="1803" y="285" transform="rotate(25 1803 285)">N</text>`);

document.getElementById('plan').innerHTML = parts.join('');
```
